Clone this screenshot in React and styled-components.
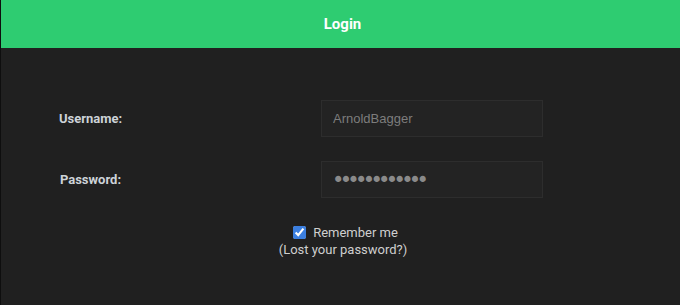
import styled, { createGlobalStyle } from 'styled-components'

const Global = createGlobalStyle`
    html, body {
        margin: 0;
        padding: 0;
        background: #202020;
    }
    body {
        font-family: Roboto, "Liberation Sans", sans-serif;
    }
`

const Page = styled.div`
    width: 680px;
    height: 305px;
    box-sizing: border-box;
    border-left: 1px solid #0e0e0e;
    background: #202020;
`

const Header = styled.div`
    height: 48px;
    background: #2ecc71;
    display: flex;
    align-items: center;
    justify-content: center;
    padding-left: 4px;
    color: #fff;
    font-weight: 700;
    font-size: 15px;
`

const Form = styled.form`
    display: grid;
    grid-template-columns: 179px 141px 222px;
    row-gap: 24px;
    align-items: center;
    padding-top: 52px;
`

const Label = styled.label`
    text-align: center;
    color: #cdd3d8;
    font-size: 13px;
    font-weight: 700;
`

const Input = styled.input`
    grid-column: 3;
    height: 37px;
    box-sizing: border-box;
    background: #232323;
    border: 1px solid #2d2d2d;
    color: #7d7d7d;
    font-family: "Liberation Sans", Arial, sans-serif;
    font-size: 13px;
    padding: 0 11px;
    outline: none;

    &[type='password'] {
        font-family: "DejaVu Sans", sans-serif;
        font-size: 21px;
        letter-spacing: -4.7px;
        color: #8a8a8a;
        padding-left: 10px;
    }
`

const Extras = styled.div`
    display: flex;
    flex-direction: column;
    align-items: center;
    margin-top: 26px;
    padding-left: 5px;
    color: #cfcfcf;
    font-size: 13px;
    line-height: 17px;
`

const Remember = styled.label`
    display: flex;
    align-items: center;
    gap: 7px;

    input {
        margin: 0 0 0 5px;
        width: 13px;
        height: 13px;
        accent-color: #3b7fe0;
    }
`

export default function App() {
    return (
        <Page>
            <Global />
            <Header>Login</Header>
            <Form>
                <Label>Username:</Label>
                <Input type="text" defaultValue="ArnoldBagger" />
                <Label>Password:</Label>
                <Input type="password" defaultValue="secretpasswd" />
            </Form>
            <Extras>
                <Remember>
                    <input type="checkbox" defaultChecked />
                    Remember me
                </Remember>
                <span>(Lost your password?)</span>
            </Extras>
        </Page>
    )
}
